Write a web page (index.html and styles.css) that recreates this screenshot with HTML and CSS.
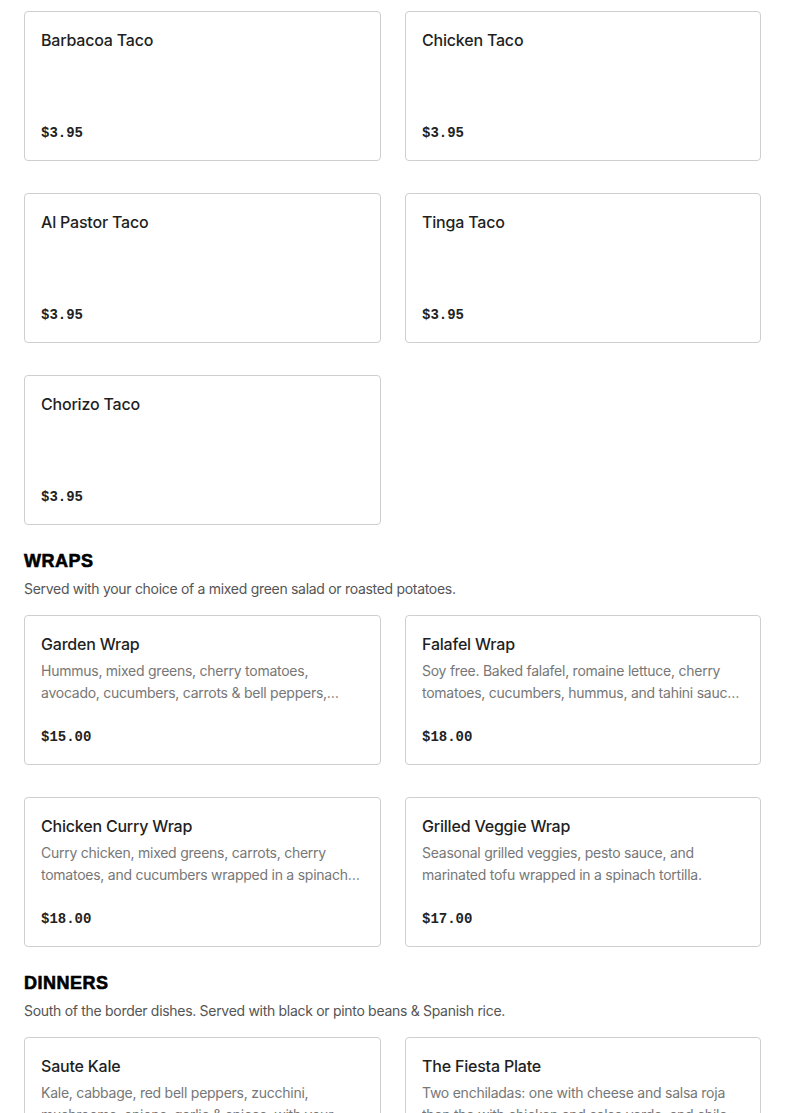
FILE: index.html
```html
<!DOCTYPE html>
<html>
<head>
<meta charset="utf-8">
<link rel="stylesheet" href="styles.css">
</head>
<body>
<div class="page">
  <div class="grid">
    <div class="card"><div class="title">Barbacoa Taco</div><div class="price">$3.95</div></div>
    <div class="card"><div class="title">Chicken Taco</div><div class="price">$3.95</div></div>
    <div class="card"><div class="title">Al Pastor Taco</div><div class="price">$3.95</div></div>
    <div class="card"><div class="title">Tinga Taco</div><div class="price">$3.95</div></div>
    <div class="card"><div class="title">Chorizo Taco</div><div class="price">$3.95</div></div>
  </div>

  <section class="section">
    <h2 class="heading">WRAPS</h2>
    <p class="subtitle">Served with your choice of a mixed green salad or roasted potatoes.</p>
    <div class="grid">
      <div class="card"><div class="title">Garden Wrap</div><div class="desc">Hummus, mixed greens, cherry tomatoes, avocado, cucumbers, carrots &amp; bell peppers, wrapped in a spinach tortilla.</div><div class="price">$15.00</div></div>
      <div class="card"><div class="title">Falafel Wrap</div><div class="desc">Soy free. Baked falafel, romaine lettuce, cherry tomatoes, cucumbers, hummus, and tahini sauce wrapped in a spinach tortilla.</div><div class="price">$18.00</div></div>
      <div class="card"><div class="title">Chicken Curry Wrap</div><div class="desc">Curry chicken, mixed greens, carrots, cherry tomatoes, and cucumbers wrapped in a spinach tortilla.</div><div class="price">$18.00</div></div>
      <div class="card"><div class="title">Grilled Veggie Wrap</div><div class="desc">Seasonal grilled veggies, pesto sauce, and marinated tofu wrapped in a spinach tortilla.</div><div class="price">$17.00</div></div>
    </div>
  </section>

  <section class="section">
    <h2 class="heading">DINNERS</h2>
    <p class="subtitle">South of the border dishes. Served with black or pinto beans &amp; Spanish rice.</p>
    <div class="grid">
      <div class="card"><div class="title">Saute Kale</div><div class="desc">Kale, cabbage, red bell peppers, zucchini, mushrooms, onions, garlic &amp; spices, with your choice of protein.</div><div class="price">$18.00</div></div>
      <div class="card"><div class="title">The Fiesta Plate</div><div class="desc">Two enchiladas: one with cheese and salsa roja then the with chicken and salsa verde, and chile relleno.</div><div class="price">$20.00</div></div>
    </div>
  </section>
</div>
</body>
</html>
```

FILE: styles.css
```css
html, body {
  margin: 0;
  padding: 0;
  background: #ffffff;
}

.page {
  padding: 11px 24px 24px 24px;
  font-family: Inter, "Liberation Sans", sans-serif;
  color: #222222;
}

.grid {
  display: grid;
  grid-template-columns: 357px 356px;
  column-gap: 24px;
  row-gap: 32px;
}

.card {
  box-sizing: border-box;
  height: 150px;
  border: 1px solid #cfcfcf;
  border-radius: 4px;
  padding: 16px 16px 17px 16px;
  display: flex;
  flex-direction: column;
}

.title {
  font-size: 16px;
  font-weight: 500;
  line-height: 24px;
  color: #1f1f1f;
  letter-spacing: -0.2px;
}

.desc {
  margin-top: 4px;
  font-size: 14px;
  line-height: 22px;
  color: #777777;
  letter-spacing: -0.25px;
  display: -webkit-box;
  -webkit-line-clamp: 2;
  -webkit-box-orient: vertical;
  overflow: hidden;
}

.price {
  margin-top: auto;
  font-family: "Liberation Mono", monospace;
  font-weight: 700;
  font-size: 14px;
  line-height: 20px;
  color: #222222;
}

.section {
  margin-top: 24px;
}

.heading {
  margin: 0;
  font-family: "Liberation Sans", Arial, sans-serif;
  font-weight: 900;
  font-size: 18px;
  line-height: 24px;
  color: #000000;
  -webkit-text-stroke: 0.6px #000;
  letter-spacing: 0.5px;
}

.subtitle {
  margin: 5px 0 15px 0;
  font-size: 14px;
  line-height: 22px;
  color: #555555;
  letter-spacing: -0.3px;
}
```
